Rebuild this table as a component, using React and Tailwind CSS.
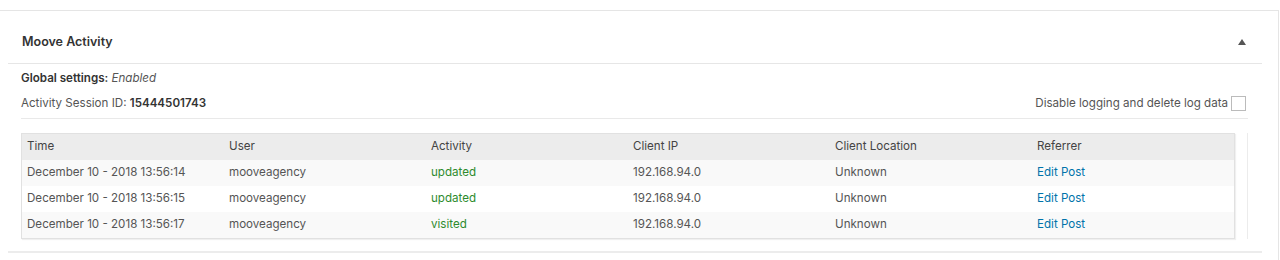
import React from "react";

const rows = [
  { time: "December 10 - 2018 13:56:14", user: "mooveagency", activity: "updated", ip: "192.168.94.0", location: "Unknown", ref: "Edit Post" },
  { time: "December 10 - 2018 13:56:15", user: "mooveagency", activity: "updated", ip: "192.168.94.0", location: "Unknown", ref: "Edit Post" },
  { time: "December 10 - 2018 13:56:17", user: "mooveagency", activity: "visited", ip: "192.168.94.0", location: "Unknown", ref: "Edit Post" },
];

const headers = ["Time", "User", "Activity", "Client IP", "Client Location", "Referrer"];

export default function App() {
  return (
    <div className="h-[260px] w-[1280px] bg-white pt-[10px] text-[#555]" style={{ fontFamily: "Inter, 'Liberation Sans', sans-serif" }}>
      <div className="h-[250px] border-t border-r border-[#e5e5e5] mr-[1px]">
        <div className="ml-2 mr-[16px]">
          {/* header */}
          <div className="flex h-[53px] items-center justify-between border-b border-[#e6e6e6] pl-[14px] pr-[16px] pt-[10px]">
            <h2 className="text-[12.5px] font-semibold text-[#333]">Moove Activity</h2>
            <span className="block h-0 w-0 border-x-[4px] border-b-[6px] border-x-transparent border-b-[#555]" />
          </div>

          <div className="pl-[13px] pr-[14px]">
            <div className="flex items-end justify-between border-b border-[#e9e9e9] pb-[2px] pt-[2px]">
              <div className="text-[11.6px] leading-[25px]">
                <p>
                  <span className="font-semibold text-[#333]">Global settings:</span> <em>Enabled</em>
                </p>
                <p>
                  Activity Session ID: <span className="font-semibold text-[#333]">15444501743</span>
                </p>
              </div>
              <label className="mb-[4px] mr-[2px] flex items-center gap-[3px] text-[11.6px]">
                Disable logging and delete log data
                <span className="inline-block h-[15px] w-[15px] border border-[#bbb] bg-white" />
              </label>
            </div>

            <div className="mt-[14px] flex">
              <div className="w-[1214px] border border-[#e1e1e1] shadow-[1px_1px_1px_rgba(0,0,0,0.06)]">
                <table className="w-full table-fixed border-collapse text-[11.6px]">
                  <thead>
                    <tr className="h-[26px] bg-[#ececec] text-left text-[#444]">
                      {headers.map((h) => (
                        <th key={h} className="px-[5px] font-normal">{h}</th>
                      ))}
                    </tr>
                  </thead>
                  <tbody>
                    {rows.map((r, i) => (
                      <tr key={i} className={`h-[26px] ${i % 2 === 0 ? "bg-[#f9f9f9]" : "bg-white"}`}>
                        <td className="px-[5px]">{r.time}</td>
                        <td className="px-[5px]">{r.user}</td>
                        <td className="px-[5px] text-[#2e8b2e]">{r.activity}</td>
                        <td className="px-[5px]">{r.ip}</td>
                        <td className="px-[5px]">{r.location}</td>
                        <td className="px-[5px] text-[#0073aa]">{r.ref}</td>
                      </tr>
                    ))}
                  </tbody>
                </table>
              </div>
              <div className="ml-[12px] w-px bg-[#ececec]" />
            </div>
          </div>

          <div className="mt-[12px] border-b-2 border-[#ececec]" />
        </div>
      </div>
    </div>
  );
}
